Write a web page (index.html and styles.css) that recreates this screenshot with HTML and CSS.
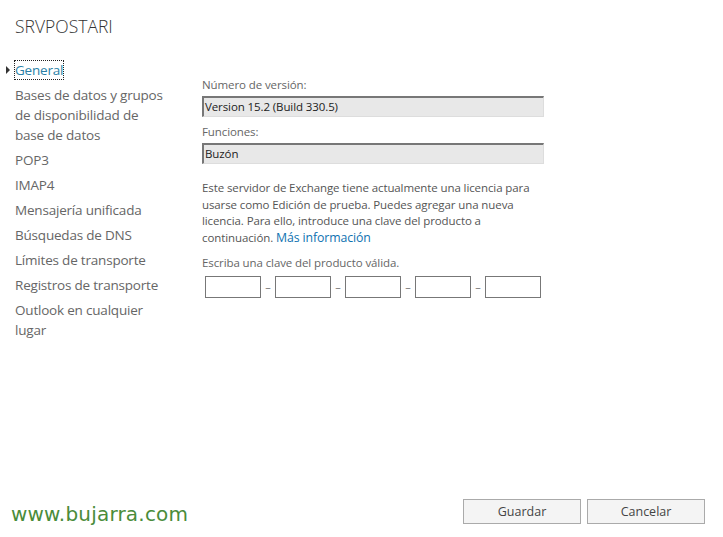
FILE: index.html
```html
<!DOCTYPE html>
<html lang="es">
<head>
<meta charset="utf-8">
<title>SRVPOSTARI</title>
<link rel="stylesheet" href="styles.css">
</head>
<body>
<div class="page">
  <h1 class="title">SRVPOSTARI</h1>
  <div class="main">
    <nav class="nav">
      <a class="nav-item active"><span class="caret"></span><span class="focus">General</span></a>
      <a class="nav-item">Bases de datos y grupos de disponibilidad de base de datos</a>
      <a class="nav-item">POP3</a>
      <a class="nav-item">IMAP4</a>
      <a class="nav-item">Mensajería unificada</a>
      <a class="nav-item">Búsquedas de DNS</a>
      <a class="nav-item">Límites de transporte</a>
      <a class="nav-item">Registros de transporte</a>
      <a class="nav-item">Outlook en cualquier lugar</a>
    </nav>
    <section class="content">
      <label class="label">Número de versión:</label>
      <div class="readonly">Version 15.2 (Build 330.5)</div>
      <label class="label">Funciones:</label>
      <div class="readonly">Buzón</div>
      <p class="desc">Este servidor de Exchange tiene actualmente una licencia para usarse como Edición de prueba. Puedes agregar una nueva licencia. Para ello, introduce una clave del producto a continuación. <a class="link">Más información</a></p>
      <label class="label">Escriba una clave del producto válida.</label>
      <div class="keys">
        <span class="key"></span><span class="dash">–</span>
        <span class="key"></span><span class="dash">–</span>
        <span class="key"></span><span class="dash">–</span>
        <span class="key"></span><span class="dash">–</span>
        <span class="key"></span>
      </div>
    </section>
  </div>
  <footer class="footer">
    <span class="brand">www.bujarra.com</span>
    <div class="buttons">
      <button class="btn">Guardar</button>
      <button class="btn">Cancelar</button>
    </div>
  </footer>
</div>
</body>
</html>
```
FILE: styles.css
```css
* { box-sizing: border-box; }
html, body { margin: 0; padding: 0; background: #fff; }
body { font-family: "Open Sans", "Noto Sans", sans-serif; color: #333; }
.page { width: 723px; height: 537px; display: flex; flex-direction: column; }
.title { margin: 0; padding: 14px 0 0 15px; font-size: 17.5px; font-weight: 300; color: #333; line-height: 24px; height: 60px; letter-spacing: 0; }
.main { display: flex; flex: 1; }
.nav { width: 202px; flex: none; padding-left: 15px; display: flex; flex-direction: column; gap: 5px; }
.nav-item { display: block; max-width: 152px; font-size: 13.5px; line-height: 20px; color: #666; font-weight: 400; position: relative; letter-spacing: -0.2px; }
.nav-item.active { color: #2a7fa6; }
.focus { outline: 1px dotted #222; outline-offset: 0; }
.caret { position: absolute; left: -9px; top: 6px; width: 0; height: 0; border-left: 4px solid #333; border-top: 4px solid transparent; border-bottom: 4px solid transparent; }
.content { padding-top: 17px; width: 342px; }
.label { display: block; font-size: 11.5px; color: #666; line-height: 16px; margin-bottom: 3px; letter-spacing: -0.1px; }
.readonly { height: 21px; background: #e8e8e8; border-top: 2px solid #777; border-left: 2px solid #777; border-right: 1px solid #ddd; border-bottom: 1px solid #ddd; font-size: 11.5px; line-height: 18px; padding-left: 1px; color: #222; margin-bottom: 7px; letter-spacing: -0.1px; }
.desc { margin: 16px 0 8px; font-size: 11.5px; line-height: 16.7px; color: #555; letter-spacing: -0.1px; }
.link { color: #0f72b1; font-size: 12.3px; line-height: 16px; }
.keys { display: flex; align-items: center; padding-left: 3px; margin-top: 5px; }
.key { width: 56px; height: 22px; flex: none; border: 1px solid #777; background: #fff; }
.dash { width: 14px; flex: none; text-align: center; font-size: 11px; line-height: 14px; color: #777; }
.footer { height: 52px; display: flex; justify-content: space-between; align-items: center; padding: 0 18px 0 11px; }
.brand { font-family: "DejaVu Sans", sans-serif; font-size: 20px; line-height: 24px; color: #4a8c3a; letter-spacing: 0.2px; margin-top: 6px; }
.buttons { display: flex; gap: 6px; }
.btn { width: 118px; height: 25px; background: #f4f4f4; border: 1px solid #aaa; font-family: "Open Sans", sans-serif; font-size: 12.5px; color: #444; padding: 0; }
```
